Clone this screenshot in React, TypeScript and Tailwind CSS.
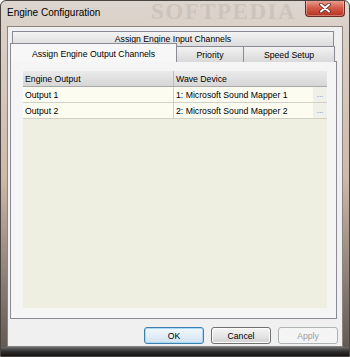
import React from 'react';

const rows = [
  { output: 'Output 1', device: '1: Microsoft Sound Mapper 1' },
  { output: 'Output 2', device: '2: Microsoft Sound Mapper 2' },
];

const CloseGlyph = () => (
  <svg width="12" height="10" viewBox="0 0 12 10">
    <path d="M2 1.5L10 8.5M10 1.5L2 8.5" stroke="#5b2a22" strokeWidth={3.6} strokeLinecap="round" />
    <path d="M2 1.5L10 8.5M10 1.5L2 8.5" stroke="#ffffff" strokeWidth={2} strokeLinecap="round" />
  </svg>
);

export default function App() {
  return (
    <div className="w-[350px] h-[357px] flex flex-col relative overflow-hidden rounded-t-[6px] border border-[#4a4540] bg-gradient-to-b from-[#ddd5ce] via-[#cdb9a8] to-[#5e5650] font-['Liberation_Sans',Arial,sans-serif] text-black">
      {/* title bar */}
      <div className="h-[25px] flex items-start justify-between pl-[6px] pr-[4px] relative">
        <span className="mt-[6px] text-[10px] leading-[12px] relative z-10">Engine Configuration</span>
        <span className="absolute left-[150px] -top-[1px] font-['Liberation_Serif',serif] font-bold text-[23px] leading-[24px] tracking-[1.5px] text-[#b7aca3] opacity-40 select-none">
          SOFTPEDIA
        </span>
        <button className="w-[40px] h-[17px] -mt-[1px] flex items-center justify-center rounded-b-[4px] border border-t-0 border-[#6a2b22] bg-gradient-to-b from-[#eaa497] via-[#d25a4a] to-[#b5301f] shadow-[inset_0_0_0_1px_rgba(255,255,255,0.35)]">
          <CloseGlyph />
        </button>
      </div>

      {/* client area */}
      <div className="flex-1 flex px-[6px]">
        <div className="flex-1 flex flex-col border border-[#8a8580] bg-[#f0f0f0] text-[8.7px] leading-[10px]">
          {/* tab control */}
          <div className="flex flex-col ml-[2px] w-[327px] pt-[4px] h-[292px]">
            <div className="ml-[2px] w-[322px] h-[15px] flex items-center justify-center border border-b-0 border-[#898c95] bg-gradient-to-b from-[#f4f4f4] to-[#dcdcdc]">
              Assign Engine Input Channels
            </div>
            <div className="h-[16px] flex items-end -mb-[1px] relative z-10">
              <div className="w-[167px] h-[19px] flex items-start justify-center pt-[5px] border border-b-0 border-[#898c95] bg-[#f7f7f7]">
                Assign Engine Output Channels
              </div>
              <div className="w-[67px] h-[16px] flex items-center justify-center border border-l-0 border-b-0 border-[#898c95] bg-gradient-to-b from-[#f2f2f2] to-[#d9d9d9]">
                Priority
              </div>
              <div className="w-[91px] h-[16px] flex items-center justify-center border border-l-0 border-b-0 border-[#898c95] bg-gradient-to-b from-[#f2f2f2] to-[#d9d9d9]">
                Speed Setup
              </div>
            </div>
            <div className="flex-1 flex border border-[#898c95] bg-[#f5f5f5] pt-[9px] pl-[12px] pr-[9px] pb-[10px]">
              <div className="flex-1 flex flex-col bg-[#eeefe0]">
                <div className="flex h-[16px] bg-gradient-to-b from-[#ebebeb] to-[#d6d6d6] border-b border-[#a9a9a9]">
                  <div className="w-[151px] flex items-center pl-[2px] border-r border-[#bdbdbd]">Engine Output</div>
                  <div className="flex-1 flex items-center pl-[2px]">Wave Device</div>
                </div>
                {rows.map((r) => (
                  <div key={r.output} className="flex h-[16px] bg-[#fcfcf1] border-b border-[#d0d0c4]">
                    <div className="w-[151px] flex items-center pl-[2px] border-r border-[#d0d0c4]">{r.output}</div>
                    <div className="flex-1 flex items-center pl-[2px]">
                      <span className="flex-1">{r.device}</span>
                      <span className="w-[14px] h-full flex items-center justify-center bg-[#f0f0ea] text-[#707070] text-[8px]">
                        ...
                      </span>
                    </div>
                  </div>
                ))}
              </div>
            </div>
          </div>

          {/* buttons */}
          <div className="flex justify-end gap-[7px] pr-[4px] mt-[8px]">
            <button className="w-[60px] h-[17px] rounded-[3px] border border-[#3c7fb1] bg-gradient-to-b from-[#f2f8fc] via-[#e3eef7] to-[#cfe2f0] shadow-[inset_0_0_0_1px_#a8d8f5] text-[8.7px] leading-[10px]">
              OK
            </button>
            <button className="w-[60px] h-[17px] rounded-[3px] border border-[#707070] bg-gradient-to-b from-[#f4f4f4] via-[#e6e6e6] to-[#d2d2d2] shadow-[inset_0_0_0_1px_#fbfbfb] text-[8.7px] leading-[10px]">
              Cancel
            </button>
            <button className="w-[60px] h-[17px] rounded-[3px] border border-[#adb2b5] bg-[#f4f4f4] text-[#9d9d9d] text-[8.7px] leading-[10px]">
              Apply
            </button>
          </div>
        </div>
      </div>

      {/* bottom frame */}
      <div className="h-[9px] bg-gradient-to-b from-[#6d6d6d] via-[#2f2f2f] to-[#141414]" />
    </div>
  );
}
